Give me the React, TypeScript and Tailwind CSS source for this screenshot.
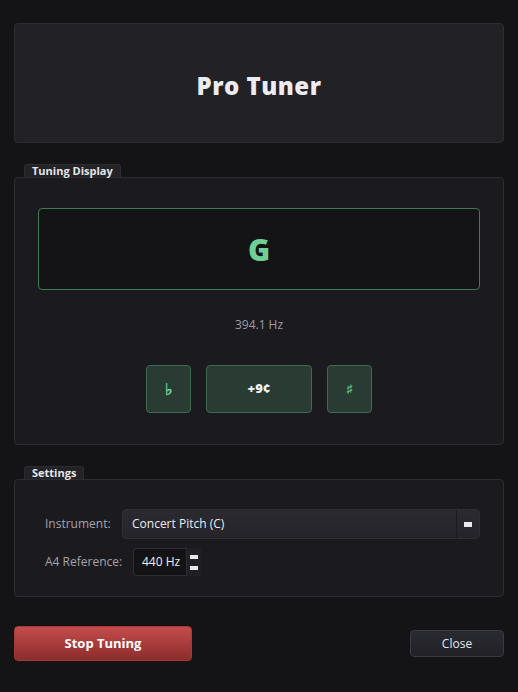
import React from 'react';

const font = { fontFamily: '"Open Sans", "Noto Sans", "Liberation Sans", sans-serif' };

const GroupLabel: React.FC<{ text: string }> = ({ text }) => (
  <div className="ml-[10px] h-[13px] w-fit rounded-t-[3px] border border-b-0 border-[#2c2c33] bg-[#222227] px-[7px] text-[11px] font-bold leading-[12px] text-[#e6e6ea]">
    {text}
  </div>
);

export default function App() {
  return (
    <div className="h-[692px] w-[518px] bg-[#141416] px-[14px] pt-[23px]" style={font}>
      {/* title */}
      <div className="flex h-[120px] items-center justify-center rounded-[4px] border border-[#2c2c33] bg-[#212126] pt-[5px]">
        <h1 className="text-[24px] font-extrabold tracking-[0.5px] text-[#ebebf0]">Pro Tuner</h1>
      </div>

      {/* tuning display */}
      <div className="mt-[21px]">
        <GroupLabel text="Tuning Display" />
        <div className="h-[268px] rounded-[4px] border border-[#2c2c33] bg-[#1b1b1f] px-[23px] pt-[30px]">
          <div className="flex h-[82px] items-center justify-center rounded-[4px] border border-[#3f7a56] bg-[#141416]">
            <span className="text-[30px] font-extrabold text-[#6fcf97]">G</span>
          </div>
          <div className="mt-[26px] text-center text-[12px] text-[#9b9ba3]">394.1 Hz</div>
          <div className="mt-[31px] flex justify-center gap-[15px]">
            <div className="flex h-[48px] w-[45px] items-center justify-center rounded-[4px] border border-[#3e6a51] bg-[#2a3b33] text-[16px] font-bold text-[#6fcf97]">
              ♭
            </div>
            <div className="flex h-[48px] w-[106px] items-center justify-center rounded-[4px] border border-[#3e6a51] bg-[#2a3b33] text-[13px] font-extrabold text-[#f2f2f5]">
              +9¢
            </div>
            <div className="flex h-[48px] w-[45px] items-center justify-center rounded-[4px] border border-[#3e6a51] bg-[#2a3b33] text-[12px] text-[#6fcf97]">
              ♯
            </div>
          </div>
        </div>
      </div>

      {/* settings */}
      <div className="mt-[21px]">
        <GroupLabel text="Settings" />
        <div className="h-[118px] rounded-[4px] border border-[#2c2c33] bg-[#1b1b1f] pl-[30px] pr-[23px] pt-[29px]">
          <div className="flex items-center">
            <span className="w-[77px] text-[12px] text-[#a3a3ab]">Instrument:</span>
            <div className="flex h-[30px] flex-1 items-center rounded-[4px] border border-[#2e2e35] bg-gradient-to-b from-[#2a2a30] to-[#24242a]">
              <span className="flex-1 pl-[9px] text-[12px] text-[#ececf0]">Concert Pitch (C)</span>
              <div className="flex h-full w-[23px] items-center justify-center border-l border-[#1c1c20]">
                <div className="h-[5px] w-[8px] bg-[#e8e8ee]" />
              </div>
            </div>
          </div>
          <div className="mt-[9px] flex items-center">
            <span className="w-[88px] text-[12px] text-[#a3a3ab]">A4 Reference:</span>
            <div className="flex h-[28px] items-center">
              <div className="flex h-full w-[54px] items-center rounded-l-[4px] border border-[#2e2e35] bg-[#131315] pl-[8px] text-[12px] text-[#ececf0]">
                440 Hz
              </div>
              <div className="flex h-full w-[14px] flex-col items-center justify-around bg-[#202024] py-[3px]">
                <div className="h-[4px] w-[8px] bg-[#e8e8ee]" />
                <div className="h-[4px] w-[8px] bg-[#e8e8ee]" />
              </div>
            </div>
          </div>
        </div>
      </div>

      {/* actions */}
      <div className="mt-[29px] flex items-center justify-between">
        <button className="h-[35px] w-[178px] rounded-[4px] border border-[#a33a3a] bg-gradient-to-b from-[#c54c4c] to-[#8c2c2c] text-[13px] font-bold text-white">
          Stop Tuning
        </button>
        <button className="h-[27px] w-[94px] rounded-[4px] border border-[#3a3a42] bg-gradient-to-b from-[#2a2a31] to-[#212127] text-[12px] text-[#e6e6ea]">
          Close
        </button>
      </div>
    </div>
  );
}
